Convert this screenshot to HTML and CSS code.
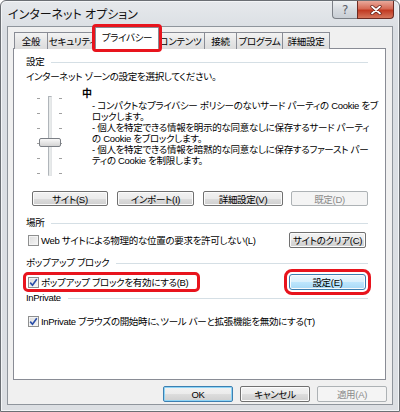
FILE: index.html
```html
<!DOCTYPE html>
<html lang="ja">
<head>
<meta charset="utf-8">
<link rel="stylesheet" href="styles.css">
</head>
<body>
<div class="window">
  <div class="titlebar">
    <span class="title">インターネット オプション</span>
    <div class="caption-btns">
      <span class="cap-btn help">?</span>
      <span class="cap-btn close">
        <svg width="14" height="10" viewBox="0 0 14 10"><path d="M3 1.5 L11 8.5 M11 1.5 L3 8.5" stroke="#5a1a12" stroke-width="3.2" stroke-linecap="round"/><path d="M3 1.5 L11 8.5 M11 1.5 L3 8.5" stroke="#fff" stroke-width="1.8" stroke-linecap="round"/></svg>
      </span>
    </div>
  </div>
  <div class="client">
    <div class="tabs">
      <span class="tab t1">全般</span>
      <span class="tab t2">セキュリティ</span>
      <span class="tab active">プライバシー</span>
      <span class="tab t4">コンテンツ</span>
      <span class="tab t5">接続</span>
      <span class="tab t6">プログラム</span>
      <span class="tab t7">詳細設定</span>
    </div>
    <div class="panel">
      <div class="group-head"><span>設定</span><i class="rule"></i></div>
      <div class="intro">インターネット ゾーンの設定を選択してください。</div>
      <div class="privacy">
        <div class="slider">
          <span class="track"></span>
          <span class="ticks left"><i></i><i></i><i></i><i></i><i></i><i></i></span>
          <span class="ticks right"><i></i><i></i><i></i><i></i><i></i><i></i></span>
          <span class="thumb"></span>
        </div>
        <div class="level">
          <div class="level-name">中</div>
          <div class="desc">
            <p>- コンパクトなプライバシー ポリシーのないサード パーティの Cookie をブ</p>
            <p>ロックします。</p>
            <p>- 個人を特定できる情報を明示的な同意なしに保存するサード パーティ</p>
            <p>の Cookie をブロックします。</p>
            <p>- 個人を特定できる情報を暗黙的な同意なしに保存するファースト パー</p>
            <p>ティの Cookie を制限します。</p>
          </div>
        </div>
      </div>
      <div class="btn-row">
        <span class="btn b1">サイト(S)</span>
        <span class="btn b2">インポート(I)</span>
        <span class="btn b3">詳細設定(V)</span>
        <span class="btn b4 disabled">既定(D)</span>
      </div>
      <div class="group-head g-place"><span>場所</span><i class="rule"></i></div>
      <div class="opt-row place-row">
        <label class="check"><span class="box"></span>Web サイトによる物理的な位置の要求を許可しない(L)</label>
        <span class="btn">サイトのクリア(C)</span>
      </div>
      <div class="group-head g-popup"><span>ポップアップ ブロック</span><i class="rule"></i></div>
      <div class="opt-row popup-row">
        <label class="check mark"><span class="box checked"><svg width="9" height="9" viewBox="0 0 9 9"><path d="M1.2 4.6 L3.5 7.2 L7.8 1.2" fill="none" stroke="#2a4ea8" stroke-width="1.6"/></svg></span>ポップアップ ブロックを有効にする(B)</label>
        <span class="btn default mark">設定(E)</span>
      </div>
      <div class="group-head g-inprivate"><span>InPrivate</span><i class="rule"></i></div>
      <div class="opt-row inprivate-row">
        <label class="check"><span class="box checked"><svg width="9" height="9" viewBox="0 0 9 9"><path d="M1.2 4.6 L3.5 7.2 L7.8 1.2" fill="none" stroke="#2a4ea8" stroke-width="1.6"/></svg></span>InPrivate ブラウズの開始時に、ツール バーと拡張機能を無効にする(T)</label>
      </div>
    </div>
    <div class="footer">
      <span class="btn fbtn ok">OK</span>
      <span class="btn fbtn">キャンセル</span>
      <span class="btn fbtn disabled">適用(A)</span>
    </div>
  </div>
</div>
</body>
</html>
```
FILE: styles.css
```css
* { box-sizing: border-box; }
html, body { margin: 0; padding: 0; }
body {
  width: 400px; height: 412px; overflow: hidden;
  font-family: "Liberation Sans", "Noto Sans CJK JP", sans-serif;
  font-size: 9.5px;
  letter-spacing: -0.3px;
  font-feature-settings: "palt";
  color: #000;
  background: #fff;
}
.window {
  width: 400px; height: 412px;
  background: linear-gradient(#e6e9ec, #dadee3 30px, #dcdfe3);
  border: 1px solid #6b6f74;
  border-radius: 6px 6px 0 0;
  display: flex; flex-direction: column;
  box-shadow: inset 0 0 0 1px #f3f5f7;
}
.titlebar {
  height: 25px;
  display: flex; align-items: flex-start;
  padding-left: 7px;
}
.title {
  font-size: 12px; line-height: 14px;
  letter-spacing: 0;
  margin-top: 7px;
  color: #111;
}
.caption-btns {
  margin-left: auto; margin-right: 5px;
  display: flex;
}
.cap-btn {
  height: 18px;
  display: flex; align-items: center; justify-content: center;
  border: 1px solid #7c8087;
  border-top: none;
}
.help {
  width: 25px;
  border-radius: 0 0 0 4px;
  background: linear-gradient(#eef0f2, #d7dbe0 50%, #c9ced5);
  color: #5b6068; font-size: 12px; font-family: "DejaVu Sans", sans-serif;
  border-right: none;
}
.close {
  width: 37px;
  border-radius: 0 0 4px 0;
  border-color: #6d2b22;
  background: linear-gradient(#e9a99b, #d66a55 45%, #c13a22 55%, #d5765c);
}
.client {
  flex: 1;
  margin: 0 6px 6px 6px;
  background: #f0f0f0;
  border: 1px solid #8f959c;
  padding: 0 5px 0 5px;
  display: flex; flex-direction: column;
}
.tabs {
  display: flex; align-items: flex-end;
  height: 22px;
  padding-left: 1px;
  position: relative; z-index: 1;
  margin-bottom: -1px;
}
.tab {
  height: 17px;
  display: flex; align-items: center; justify-content: center;
  border: 1px solid #898c95;
  border-bottom: none;
  margin-left: -1px;
  background: linear-gradient(#f3f3f3, #e6e6e6 50%, #dcdcdc);
  color: #000;
  white-space: nowrap;
  flex: none;
}
.t1 { width: 34px; margin-left: 0; }
.t2 { width: 51px; }
.t4 { width: 49px; }
.t5 { width: 33px; }
.t6 { width: 47px; }
.t7 { width: 48px; }
.tab.active {
  width: 64px;
  height: 22px;
  background: #fff;
  margin: 0 -2px 0 -3px;
  position: relative; z-index: 2;
  outline: 3px solid #e8141d;
  outline-offset: 0;
  border-radius: 1px;
  padding-bottom: 3px;
}
.panel {
  height: 332px;
  background: #fff;
  border: 1px solid #898c95;
  margin-right: 1px;
  padding: 7px 19px 0 12px;
  display: flex; flex-direction: column;
}
.group-head {
  display: flex; align-items: center;
  height: 12px; line-height: 12px;
}
.group-head .rule {
  flex: 1; height: 1px; background: #d5dfe5; margin-left: 7px; margin-right: -2px; margin-top: 1px;
}
.intro { margin-top: 3px; height: 12px; line-height: 12px; }
.privacy { display: flex; height: 96px; margin-top: 5px; }
.slider {
  position: relative;
  flex: none;
  width: 28px; margin-left: 10px; margin-top: 8px; height: 82px;
}
.track {
  position: absolute; left: 12px; top: 0; width: 4px; height: 80px;
  border: 1px solid #b0b5ba; border-right-color: #e3e5e7; border-bottom-color: #e3e5e7;
  background: #e7eaea;
}
.ticks { position: absolute; top: 2px; display: flex; flex-direction: column; gap: 14px; }
.ticks.left { left: 1px; }
.ticks.right { left: 23px; }
.ticks i { display: block; width: 3px; height: 1px; background: #a0a0a0; }
.thumb {
  position: absolute; left: 3px; top: 42px; width: 22px; height: 9px;
  border: 1px solid #7b7f85; border-radius: 2px;
  background: linear-gradient(#f8f8f8, #e6e6e6 50%, #d4d4d4);
}
.level { margin-left: 18px; flex: none; }
.level-name { font-weight: bold; height: 12px; line-height: 12px; font-size: 10px; }
.desc { margin: 0 0 0 10px; }
.desc p { margin: 0; line-height: 11px; white-space: nowrap; }
.btn-row {
  display: flex; gap: 0; margin-top: 7px; padding-left: 6px;
}
.btn {
  height: 15px;
  display: inline-flex; align-items: center; justify-content: center;
  border: 1px solid #707070; border-radius: 2px;
  background: linear-gradient(#f2f2f2, #ebebeb 50%, #dddddd 51%, #cfcfcf);
  box-shadow: inset 0 0 0 1px #fbfbfb;
  white-space: nowrap;
  flex: none;
}
.b1 { width: 76px; }
.b2 { width: 77px; margin-left: 9px; }
.b3 { width: 80px; margin-left: 9px; }
.b4 { width: 77px; margin-left: 8px; }
.btn.disabled {
  border-color: #adb2b5; background: #f4f4f4; color: #8b8b8b; box-shadow: none;
}
.g-place { margin-top: 11px; }
.opt-row {
  display: flex; align-items: center; justify-content: space-between;
  height: 18px; padding-left: 2px;
}
.place-row { margin-top: 2px; }
.opt-row .btn { width: 77px; height: 16px; }
.check { display: flex; align-items: center; height: 14px; }
.box {
  width: 11px; height: 11px; margin-right: 2px;
  border: 1px solid #8e8f8f;
  background: linear-gradient(135deg, #dcdcdc, #f6f6f6);
  box-shadow: inset 0 0 0 1px #f4f4f4;
  display: inline-flex; align-items: center; justify-content: center;
  flex: none;
}
.g-popup { margin-top: 8px; }
.popup-row { margin-top: 4px; }
.check.mark {
  outline: 3px solid #e8141d; outline-offset: 0; border-radius: 2px;
  margin-left: -2px; padding: 0 9px 0 2px;
}
.btn.default {
  border-color: #3c7fb1;
  background: linear-gradient(#eaf6fd, #d9f0fc 50%, #bee6fd 51%, #a7d9f5);
}
.btn.default.mark { outline: 3px solid #e8141d; outline-offset: 2px; border-radius: 3px; }
.g-inprivate { margin-top: 1px; }
.inprivate-row { margin-top: 8px; }
.footer {
  display: flex; justify-content: flex-end; gap: 7px;
  margin-top: 6px;
}
.fbtn { width: 70px; height: 16px; }
.btn.ok { border-color: #3c7fb1; box-shadow: inset 0 0 0 1px #8ed4f5; }
```
